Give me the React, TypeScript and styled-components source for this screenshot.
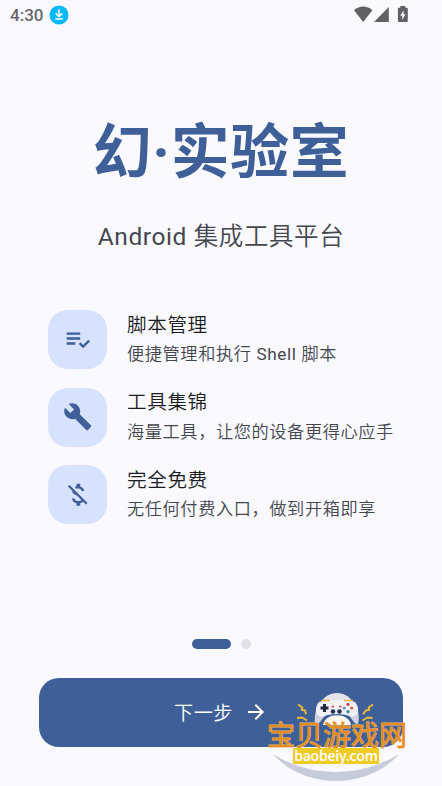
import React from "react"
import styled, { createGlobalStyle } from "styled-components"
import { MdArrowForward, MdBuild, MdMoneyOff } from "react-icons/md"

interface Feature {
  readonly id: number;
  title: string;
  desc: string;
  icon: React.ReactNode;
}

const features: Feature[] = [
  { id: 1, title: "脚本管理", desc: "便捷管理和执行 Shell 脚本", icon: <PlaylistIcon /> },
  { id: 2, title: "工具集锦", desc: "海量工具，让您的设备更得心应手", icon: <MdBuild /> },
  { id: 3, title: "完全免费", desc: "无任何付费入口，做到开箱即享", icon: <MdMoneyOff /> },
]

export default function App() {
  return (
    <Wrapper>
      <GlobalStyle />
      <StatusBar>
        <StatusGroup>
          <Time>4:30</Time>
          <DownloadIcon />
        </StatusGroup>
        <SystemIcons />
      </StatusBar>
      <Title>幻·实验室</Title>
      <SubTitle>Android 集成工具平台</SubTitle>
      <FeatureList>
        {features.map((feature) => (
          <FeatureRow key={feature.id}>
            <IconBox>{feature.icon}</IconBox>
            <FeatureText>
              <FeatureTitle>{feature.title}</FeatureTitle>
              <FeatureDesc>{feature.desc}</FeatureDesc>
            </FeatureText>
          </FeatureRow>
        ))}
      </FeatureList>
      <Pager>
        <Dot $active />
        <Dot />
      </Pager>
      <NextButton>
        下一步
        <MdArrowForward />
      </NextButton>
      <Watermark>
        <Gamepad />
        <SiteName>宝贝游戏网</SiteName>
        <SiteUrl>baobeiy.com</SiteUrl>
      </Watermark>
    </Wrapper>
  )
}

function PlaylistIcon() {
  return (
    <svg viewBox="0 0 24 24" fill="currentColor">
      <path d="M3 10h11v2H3zM3 6h11v2H3zM3 14h7v2H3zM20.59 11.93l-4.25 4.24-2.12-2.12-1.41 1.41L16.34 19 22 13.34z" />
    </svg>
  )
}

function DownloadIcon() {
  return (
    <svg width="20" height="20" viewBox="0 0 20 20">
      <circle cx="10" cy="10" r="9.5" fill="#05b8fb" />
      <path d="M10 4.3v7M6.7 8.4l3.3 3.3 3.3-3.3M6.3 14h7.4" fill="none" stroke="#fff" strokeWidth="1.5" />
    </svg>
  )
}

function SystemIcons() {
  return (
    <svg width="56" height="18" viewBox="0 0 56 18" fill="#616165">
      <path d="M0 4.2C5.5-.6 13-.6 18.4 4.2L9.2 16z" />
      <path d="M34.8 1v15H20z" />
      <path d="M46.3 0h5v1.8h1.2c.8 0 1.3.5 1.3 1.3v11.6c0 .8-.5 1.3-1.3 1.3h-7.3c-.8 0-1.3-.5-1.3-1.3V3.1c0-.8.5-1.3 1.3-1.3h1.1z" />
      <path d="M49.6 4.3l-3.4 5.5h2v4l3.4-5.6h-2z" fill="#f9f9ff" />
    </svg>
  )
}

function Gamepad() {
  return (
    <PadSvg viewBox="0 0 150 94">
      <path d="M7 62c37 24 88 24 126 0-31 36-95 36-126 0z" fill="#c8cbd9" />
      <path d="M54 13C59-3 83-3 88 13z" fill="#e4e5ea" />
      <path d="M57 33C59 20 83 20 85 33z" fill="#fbf7ee" />
      <path d="M53 10c-3 7-5 15-4 22 5 1 7-6 11-9 5-3 17-3 22 0 4 3 6 10 10 9 2-7 0-15-3-22z" fill="#cfd2e1" />
      <path d="M53 10c9-3 27-3 36 0 5 6 4 14-3 15-8-4-22-4-30 0-7-1-8-9-3-15z" fill="#f1f1f5" />
      <path d="M55 8.5h9M78 8.5h9" stroke="#e4b544" strokeWidth="1.5" />
      <path d="M58.5 12v8M54.500 16h8" stroke="#242a3e" strokeWidth="3" />
      <circle cx="67" cy="19.5" r="2.3" fill="#263150" />
      <circle cx="73.5" cy="19.5" r="2.3" fill="#263150" />
      <path d="M65.5 14.5h2.500M73 14.5h2.500" stroke="#d73c58" strokeWidth="1.3" />
      <circle cx="82" cy="12.3" r="1.6" fill="#d73c58" />
      <circle cx="78.3" cy="16" r="1.6" fill="#579bd0" />
      <circle cx="85.7" cy="16" r="1.6" fill="#e05b4a" />
      <circle cx="82" cy="19.7" r="1.6" fill="#2d8797" />
      <g fill="none" stroke="#e9b93a" strokeWidth="2" strokeLinejoin="bevel">
        <path d="M32 12.500l4.500 3-1 2.500 3.500.3 1 4" />
        <path d="M107 12.500l-4.500 3 1 2.500-3.500.3-3 4" />
        <path d="M31 26l5-.5 5 3" />
        <path d="M106.500 26l-5-.5-5 3" />
      </g>
    </PadSvg>
  )
}

const GlobalStyle = createGlobalStyle`
  body {
    margin: 0;
    background: #f9f9ff;
  }
`;

const Wrapper = styled.div`
  position: relative;
  display: flex;
  flex-direction: column;
  width: 442px;
  height: 786px;
  overflow: hidden;
  background: #f9f9ff;
  font-family: Roboto, "Noto Sans CJK SC DemiLight", "Noto Sans CJK SC", sans-serif;
  letter-spacing: 0.6px;
`;

const StatusBar = styled.div`
  display: flex;
  justify-content: space-between;
  align-items: center;
  height: 30px;
  padding: 0 32px 0 10px;
`;

const StatusGroup = styled.div`
  display: flex;
  align-items: center;
  gap: 6px;
`;

const Time = styled.span`
  color: #68686c;
  font-size: 17px;
  font-weight: 500;
  letter-spacing: 0;
`;

const Title = styled.h1`
  margin: 86px 0 0;
  color: #3e5f98;
  font-family: Roboto, "Noto Sans CJK SC", sans-serif;
  font-size: 58.9px;
  font-weight: 700;
  line-height: 74px;
  text-align: center;
`;

const SubTitle = styled.div`
  margin-top: 29px;
  color: #44474e;
  font-size: 24.5px;
  line-height: 36px;
  text-align: center;
`;

const FeatureList = styled.div`
  display: flex;
  flex-direction: column;
  gap: 18.5px;
  margin: 55px 0 0 48px;
`;

const FeatureRow = styled.div`
  display: flex;
  align-items: center;
  gap: 20px;
  height: 59px;
`;

const IconBox = styled.div`
  display: flex;
  align-items: center;
  justify-content: center;
  width: 59px;
  height: 59px;
  border-radius: 20px;
  background: #d7e2ff;
  color: #3e5f98;

  svg {
    width: 29.5px;
    height: 29.5px;
  }
`;

const FeatureText = styled.div`
  padding-top: 1px;
`;

const FeatureTitle = styled.div`
  color: #191c20;
  font-size: 19.6px;
  line-height: 29.5px;
`;

const FeatureDesc = styled.div`
  color: #44474e;
  font-size: 17.2px;
  line-height: 29.5px;
`;

const Pager = styled.div`
  display: flex;
  justify-content: center;
  gap: 10px;
  margin-top: 115px;
`;

const Dot = styled.span<{ $active?: boolean }>`
  width: ${({ $active }) => ($active ? "39px" : "10px")};
  height: 10px;
  border-radius: 5px;
  background: ${({ $active }) => ($active ? "#3e5f98" : "#e1e2e9")};
`;

const NextButton = styled.button`
  display: flex;
  align-items: center;
  justify-content: center;
  gap: 11px;
  width: 364px;
  height: 69px;
  margin: 29px 0 0 39px;
  padding: 0 0 2px;
  border: 0;
  border-radius: 20px;
  background: #3e5f98;
  color: #fff;
  font-family: inherit;
  font-size: 19.1px;
  letter-spacing: 0.6px;

  svg {
    width: 24px;
    height: 24px;
  }
`;

/* site mark floats over the corner of the button */
const Watermark = styled.div`
  position: absolute;
  left: 266px;
  top: 692px;
  width: 150px;
  height: 94px;
`;

const PadSvg = styled.svg`
  position: absolute;
  left: 0;
  top: 0;
  width: 150px;
  height: 94px;
`;

const SiteName = styled.div`
  position: absolute;
  left: 1px;
  top: 28px;
  color: #e58c1f;
  font-family: "Noto Sans CJK SC", sans-serif;
  font-size: 28px;
  font-weight: 400;
  line-height: 28px;
  letter-spacing: 0;
  white-space: nowrap;
  -webkit-text-stroke: 1px #efb568;
  paint-order: stroke fill;
`;

const SiteUrl = styled.div`
  position: absolute;
  left: 27px;
  top: 56px;
  width: 86px;
  height: 16px;
  background: #efcb25;
  color: #fff;
  font-family: "Noto Sans CJK SC", sans-serif;
  font-size: 14px;
  font-weight: 500;
  line-height: 14px;
  letter-spacing: -0.2px;
  text-align: center;
`;
